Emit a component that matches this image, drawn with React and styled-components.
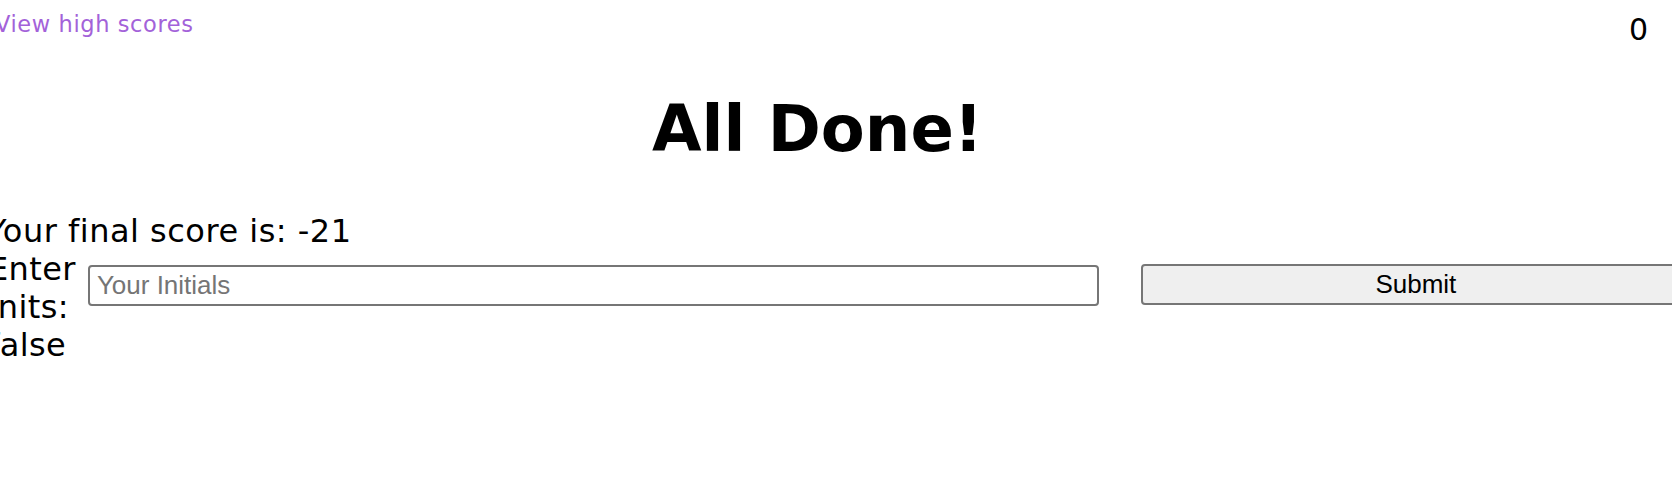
import React from "react";
import styled, { createGlobalStyle } from "styled-components";

const GlobalStyle = createGlobalStyle`
  html, body {
    margin: 0;
    padding: 0;
    overflow: hidden;
    background: #fff;
  }
  body {
    font-family: "DejaVu Sans", Verdana, sans-serif;
    color: #000;
  }
`;

const Page = styled.div`
  margin: 0 24px 0 -13px;
`;

const Header = styled.header`
  display: flex;
  justify-content: space-between;
  align-items: flex-start;
`;

const HighScores = styled.a`
  font-size: 22.5px;
  letter-spacing: 0.6px;
  color: #a362d9;
  text-decoration: none;
  margin: 11px 0 0 8px;
  cursor: pointer;
`;

const Timer = styled.div`
  font-size: 30px;
  margin-top: 12px;
`;

const Title = styled.h1`
  font-size: 64px;
  font-weight: bold;
  text-align: center;
  margin: 45px 0 46px;
`;

const Score = styled.p`
  font-size: 32px;
  letter-spacing: 0.5px;
  margin: 0;
`;

const Form = styled.form`
  display: flex;
  align-items: flex-start;
`;

const Label = styled.label`
  font-size: 32px;
  letter-spacing: 0.4px;
  width: min-content;
  flex-shrink: 0;
  margin-left: 1px;
`;

const Input = styled.input`
  flex-shrink: 0;
  box-sizing: border-box;
  width: 1011px;
  height: 41px;
  margin: 15px 0 0 12px;
  padding: 0 7px;
  border: 2px solid #767676;
  border-radius: 4px;
  font-family: "Liberation Sans", Arial, sans-serif;
  font-size: 26px;
  color: #000;
  outline: none;

  &::placeholder {
    color: #757575;
  }
`;

const Button = styled.button`
  flex-shrink: 0;
  box-sizing: border-box;
  width: 550px;
  height: 41px;
  margin: 14px 0 0 42px;
  padding: 0;
  background: #efefef;
  border: 2px solid #767676;
  border-radius: 4px;
  font-family: "Liberation Sans", Arial, sans-serif;
  font-size: 26px;
  color: #000;
`;

const App = () => {
  const score = -21;
  const saved = false;

  return (
    <React.Fragment>
      <GlobalStyle />
      <Page>
        <Header>
          <HighScores>View high scores</HighScores>
          <Timer>0</Timer>
        </Header>
        <Title>All Done!</Title>
        <Score>Your final score is: {score}</Score>
        <Form onSubmit={e => e.preventDefault()}>
          <Label>Enter Inits: {String(saved)}</Label>
          <Input type="text" placeholder="Your Initials" />
          <Button type="submit">Submit</Button>
        </Form>
      </Page>
    </React.Fragment>
  );
};

export default App;
